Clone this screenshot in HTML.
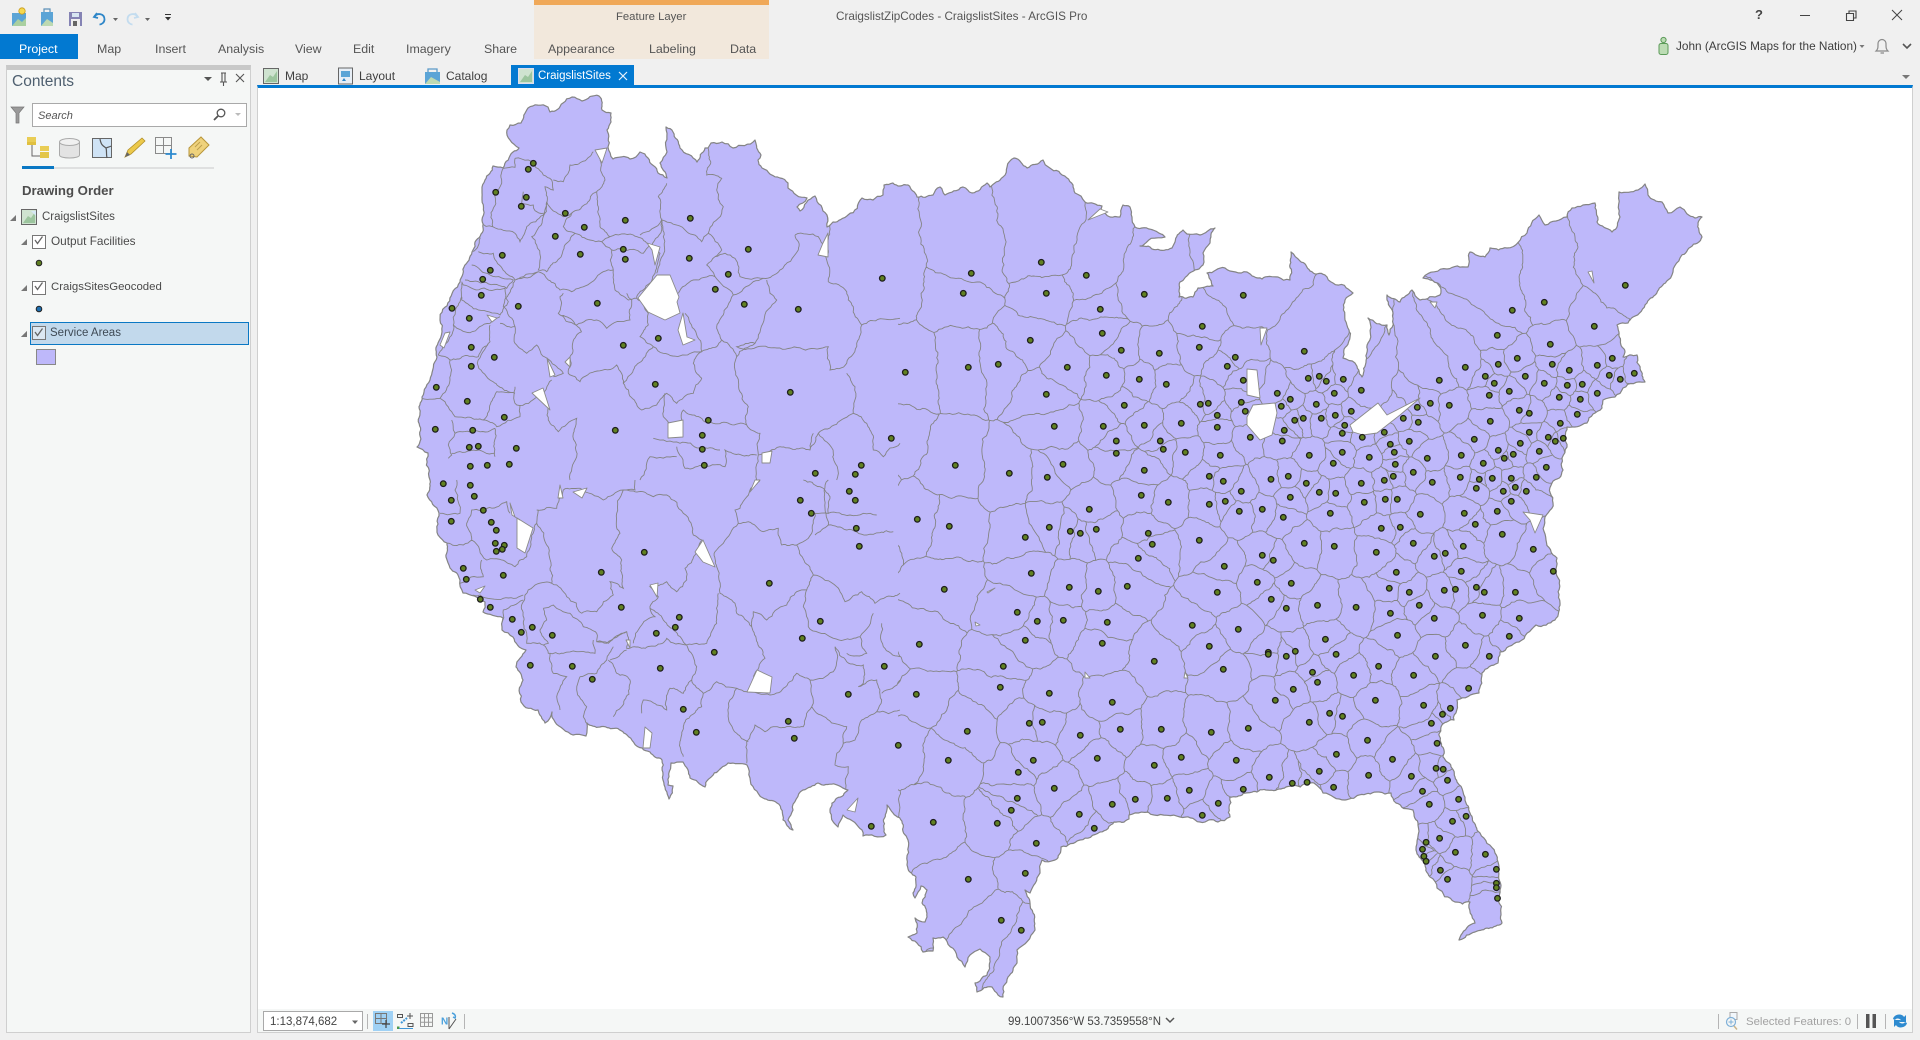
<!DOCTYPE html>
<html lang="en">
<head>
<meta charset="utf-8">
<title>CraigslistZipCodes - CraigslistSites - ArcGIS Pro</title>
<style>
html,body{margin:0;padding:0;width:1920px;height:1040px;overflow:hidden;background:#f0f0f0;font-family:"Liberation Sans",sans-serif;color:#444}
.b{position:absolute;box-sizing:border-box}
.t{position:absolute;white-space:nowrap;line-height:16px;font-size:12px}
.r{font-size:12.4px;color:#555}
svg{position:absolute;overflow:visible}
</style>
</head>
<body>
<!-- ribbon -->
<div class="b" style="left:534px;top:0;width:235px;height:59px;background:#f2e8dc"></div>
<div class="b" style="left:534px;top:0;width:235px;height:5px;background:#f0a858"></div>
<div class="t" style="left:616px;top:9px;color:#555;font-size:11.300px">Feature Layer</div>
<div class="t" style="left:836px;top:9px;color:#555;font-size:11.700px">CraigslistZipCodes - CraigslistSites - ArcGIS Pro</div>
<div class="b" style="left:0;top:34px;width:78px;height:25px;background:#0279d1"></div>
<div class="t" style="left:19px;top:41px;color:#fff;font-size:12.400px">Project</div>
<div class="t r" style="left:97px;top:41px">Map</div>
<div class="t r" style="left:155px;top:41px">Insert</div>
<div class="t r" style="left:218px;top:41px">Analysis</div>
<div class="t r" style="left:295px;top:41px">View</div>
<div class="t r" style="left:353px;top:41px">Edit</div>
<div class="t r" style="left:406px;top:41px">Imagery</div>
<div class="t r" style="left:484px;top:41px">Share</div>
<div class="t r" style="left:548px;top:41px">Appearance</div>
<div class="t r" style="left:649px;top:41px">Labeling</div>
<div class="t r" style="left:730px;top:41px">Data</div>

<!-- quick access -->
<svg style="left:0;top:0" width="190" height="34" viewBox="0 0 190 34">
  <path d="M12 13h14v13H12z" fill="#5ba4d6"/><path d="M12 26l6-7 4 3 4-4v8z" fill="#a9cfa0"/><circle cx="22" cy="11" r="3.200" fill="#f5d84e" stroke="#c79a1a" stroke-width=".8"/>
  <path d="M41 12h12v14H41z" fill="#5ba4d6"/><path d="M41 26l6-7 6 4v3z" fill="#bcd9b2"/><path d="M44 12V9h6v3" fill="none" stroke="#5b8fb8" stroke-width="1.200"/>
  <path d="M69 12h13v14H69z" fill="#8583b4"/><path d="M71 19h9v7h-9z" fill="#eee"/><path d="M72 13h7v4h-7z" fill="#d8e6f2"/><path d="M73 21h4v5h-4z" fill="#666"/>
  <path d="M97 13l-3 4 4 1" fill="none" stroke="#2e86c8" stroke-width="1.800"/><path d="M94.500 16.500c3-4 10-3 10 3 0 3-3 5-5 5" fill="none" stroke="#2e86c8" stroke-width="1.800"/>
  <path d="M113 18h5l-2.500 3z" fill="#666"/>
  <path d="M135 13l3 4-4 1" fill="none" stroke="#c3dcef" stroke-width="1.800"/><path d="M137.500 16.500c-3-4-10-3-10 3 0 3 3 5 5 5" fill="none" stroke="#c3dcef" stroke-width="1.800"/>
  <path d="M145 18h5l-2.500 3z" fill="#666"/>
  <path d="M165 14h6v1h-6zM165 17h6l-3 3.500z" fill="#333"/>
</svg>

<!-- window controls -->
<div class="t" style="left:1755px;top:7px;font-weight:700;font-size:13px;color:#444">?</div>
<svg style="left:1790px;top:0" width="125" height="30" viewBox="0 0 125 30">
  <path d="M10 15.500h10" stroke="#444" stroke-width="1"/>
  <path d="M56.500 13.500h7v7h-7zM59 13.500V11h7v7h-2.500" fill="none" stroke="#444" stroke-width="1.100"/>
  <path d="M102 10l10 10M112 10l-10 10" stroke="#444" stroke-width="1"/>
</svg>
<svg style="left:1655px;top:36px" width="265" height="20" viewBox="0 0 265 20">
  <circle cx="8.500" cy="4" r="2.600" fill="#bcdcb4" stroke="#5b9a58"/><rect x="4" y="7.500" width="9" height="11" rx="2" fill="#bcdcb4" stroke="#5b9a58"/>
  <path d="M204.500 9h5l-2.500 3z" fill="#777"/>
  <path d="M221 15c2-2 2-3 2-7 0-6 8-6 8 0 0 4 0 5 2 7zM225.500 17h3.500" fill="#f0f0f0" stroke="#8a8a8a" stroke-width="1.200"/>
  <path d="M248 8l4 4 4-4" fill="none" stroke="#555" stroke-width="1.600"/>
</svg>
<div class="t" style="left:1676px;top:38px;color:#3d3d3d;font-size:11.800px">John (ArcGIS Maps for the Nation)</div>

<!-- contents pane -->
<div class="b" style="left:6px;top:65px;width:245px;height:968px;background:#f5f7f6;border:1px solid #cfcfcf;border-top:5px solid #c8c8c8"></div>
<div class="t" style="left:12px;top:73.500px;font-size:15.500px;color:#4f6070">Contents</div>
<div class="b" style="left:32px;top:103px;width:215px;height:24px;background:#fff;border:1px solid #a9a9a9"></div>
<div class="t" style="left:38px;top:108px;font-style:italic;color:#555;font-size:11px">Search</div>
<svg style="left:0;top:60px" width="255" height="320" viewBox="0 0 255 320">
  <path d="M204 17h8l-4 4z" fill="#555"/>
  <path d="M221 13h5M222 13v9h3v-9M220 22h7M223.500 22v4" fill="none" stroke="#555" stroke-width="1.100"/>
  <path d="M236 14l8 8M244 14l-8 8" stroke="#555" stroke-width="1.100"/>
  <path d="M11 47h13l-5 6v10h-3V53z" fill="#9a9a9a" stroke="#777" stroke-width=".7"/>
  <circle cx="221" cy="53" r="3.800" fill="#fff" stroke="#555" stroke-width="1.300"/><path d="M218 56l-4 4" stroke="#555" stroke-width="1.800"/>
  <path d="M235 53h6l-3 3z" fill="#bbb"/>
  <!-- tab icons -->
  <rect x="27" y="77" width="9" height="5" fill="#e9cd55"/><rect x="27" y="82" width="9" height="3" fill="#e0c040"/>
  <path d="M32 85v11h8" fill="none" stroke="#666"/><rect x="40" y="86" width="9" height="5" fill="#e9cd55"/><rect x="40" y="92" width="9" height="6" fill="#e3c648"/>
  <path d="M59.500 82v13c0 4 20 4 20 0V82" fill="#e3e3e3" stroke="#aaa"/><ellipse cx="69.500" cy="82" rx="10" ry="3.500" fill="#f0f0f0" stroke="#aaa"/>
  <rect x="92.500" y="78.500" width="19" height="19" fill="#cfe3f5" stroke="#666"/><path d="M100 79c1 6 3 7 6 9 1 3 0 6 1 10M106 88c2-1 4-1 5-2" fill="none" stroke="#555" stroke-width="1.200"/>
  <path d="M125 97l3-7 14-12 3 3-14 13z" fill="#ecc94b" stroke="#b2902a" stroke-width=".8"/><path d="M125 97l2-5 3 3z" fill="#666"/>
  <path d="M155.500 77.500h16v16h-16zM163.500 77.500v16M155.500 85.500h16" fill="none" stroke="#8a8a8a"/><path d="M171 89v10M165.500 94h11" stroke="#2e8bd0" stroke-width="1.800"/>
  <path d="M189 88l12-11 8 8-12 12-8-1z" fill="#efd27c" stroke="#b8963a"/><circle cx="192" cy="96" r="2" fill="none" stroke="#666"/><path d="M195 87l5-5M197 90l5-5" stroke="#bda050"/>
  <rect x="22" y="107.500" width="192" height="1" fill="#c9c9c9"/><rect x="22" y="106" width="32" height="3" fill="#0a78c4"/>
  <!-- tree -->
  <path d="M10 161l6-6v6z" fill="#777"/>
  <rect x="21.500" y="149.500" width="15" height="15" fill="#cfe3d0" stroke="#666"/><path d="M23 163l5-7 3 2 4-6v11z" fill="#9cc59e"/><path d="M31 151h5v5z" fill="#d6e8f5"/>
  <path d="M21 185l6-6v6zM21 231l6-6v6zM21 277l6-6v6z" fill="#777"/>
  <g fill="#fff" stroke="#777"><rect x="32.500" y="175.500" width="13" height="13"/><rect x="32.500" y="221.500" width="13" height="13"/><rect x="32.500" y="267.500" width="13" height="13"/></g>
</svg>
<div class="t" style="left:22px;top:182.500px;font-size:13.200px;font-weight:700;color:#4d4d4d">Drawing Order</div>
<div class="t" style="left:42px;top:209px;color:#4a4a4a;font-size:11.500px">CraigslistSites</div>
<div class="t" style="left:51px;top:233px;color:#4a4a4a;font-size:11.800px">Output Facilities</div>
<div class="t" style="left:51px;top:279px;color:#4a4a4a;font-size:11.400px">CraigsSitesGeocoded</div>
<div class="b" style="left:30px;top:322px;width:219px;height:23px;background:#c2d9ec;border:1px solid #0a78c4"></div>
<div class="t" style="left:50px;top:325px;color:#3f4a55;font-size:11.500px">Service Areas</div>
<svg style="left:0;top:230px" width="70" height="140" viewBox="0 0 70 140">
  <path d="M21 107l6-6v6z" fill="#777"/>
  <rect x="32.500" y="96.500" width="13" height="13" fill="#dce8f2" stroke="#777"/>
  <path d="M35 10l2.500 3.500 5-7M35 56l2.500 3.500 5-7M35 102l2.500 3.500 5-7" fill="none" stroke="#666" stroke-width="1.300"/>
  <circle cx="39" cy="33" r="2.800" fill="#5f7f22" stroke="#222"/>
  <circle cx="39" cy="79" r="2.800" fill="#1f6fb0" stroke="#222"/>
  <rect x="36.500" y="119.500" width="19" height="15" fill="#beb8fa" stroke="#888"/>
</svg>

<!-- doc tabs -->
<div class="b" style="left:511px;top:65px;width:123px;height:21px;background:#0279d1"></div>
<div class="t" style="left:285px;top:68px;color:#3f3f3f;font-size:12px">Map</div>
<div class="t" style="left:359px;top:68px;color:#3f3f3f;font-size:12px">Layout</div>
<div class="t" style="left:446px;top:68px;color:#3f3f3f;font-size:12px">Catalog</div>
<div class="t" style="left:538px;top:68px;color:#fff;font-size:11.500px">CraigslistSites</div>
<svg style="left:255px;top:60px" width="400" height="28" viewBox="0 0 400 28">
  <rect x="8.500" y="8.500" width="15" height="15" fill="#cfe3d0" stroke="#666"/><path d="M10 22l5-7 3 2 4-6v11z" fill="#9cc59e"/>
  <rect x="83.500" y="8" width="14" height="16" fill="#e7eef6" stroke="#666"/><path d="M86 11h9v6h-9z" fill="#5ba4d6"/><path d="M87 21h4l-2-3z" fill="#2e86c8"/>
  <path d="M170 12h15v12h-15z" fill="#5ba4d6"/><path d="M170 24l6-7 9 5v2z" fill="#bcd9b2"/><path d="M173 12V9h9v3" fill="none" stroke="#5b9ac8" stroke-width="1.300"/>
  <rect x="263.500" y="8.500" width="15" height="15" fill="#cfe3d0" stroke="#dde"/><path d="M265 22l5-7 3 2 4-6v11z" fill="#9cc59e"/>
  <path d="M364 12l8 8M372 12l-8 8" stroke="#e8f2fb" stroke-width="1.200"/>
</svg>
<svg style="left:1900px;top:72px" width="14" height="10" viewBox="0 0 14 10"><path d="M2 3h8l-4 4z" fill="#777"/></svg>

<!-- map view -->
<div class="b" style="left:257px;top:85px;width:1656px;height:948px;background:#fff;border:1px solid #cfcfcf;border-top:3px solid #0279d1"></div>
<div class="b" style="left:258px;top:1009px;width:1654px;height:23px;background:#f5f7f6"></div>

<svg id="map" style="left:0;top:0" width="1920" height="1040" viewBox="0 0 1920 1040">
  <defs>
    <clipPath id="us"><polygon id="clipPoly" points=""/></clipPath>
    <clipPath id="east"><rect x="898" y="80" width="830" height="935"/></clipPath>
  </defs>
  <polygon id="usFill" fill="#beb8fa" stroke="#848484" stroke-width="1.200" stroke-linejoin="round" points=""/>
  <g clip-path="url(#us)" fill="none" stroke="#848484" stroke-width=".9">
    <path id="lines" clip-path="url(#east)" d=""/>
    <path id="west" d=""/>
  </g>
  <g id="holes" fill="#fff" stroke="#8a8a8a" stroke-width=".9" stroke-linejoin="round"></g>
  <g id="dots" fill="#618122" stroke="#1e1e1e" stroke-width="1.300"></g>
</svg>

<!-- status bar -->
<div class="b" style="left:263px;top:1011px;width:100px;height:20px;background:#fff;border:1px solid #a9a9a9"></div>
<div class="t" style="left:270px;top:1014px;color:#444;font-size:11.500px">1:13,874,682</div>
<div class="b" style="left:373px;top:1011px;width:20px;height:20px;background:#9fd1f5"></div>
<div class="t" style="left:1008px;top:1014px;color:#444;font-size:11.500px">99.1007356°W 53.7359558°N</div>
<div class="t" style="left:1746px;top:1014px;color:#a2a2a2;font-size:11.400px">Selected Features: 0</div>
<svg style="left:0;top:1005px" width="1920" height="32" viewBox="0 0 1920 32">
  <path d="M352 15.500h6l-3 3.500z" fill="#666"/>
  <path d="M367.500 9v15M464.500 9v15M1718.500 9v15M1857.500 9v15M1885.500 9v15" stroke="#b5b5b5"/>
  <path d="M375.500 8.500h11v10h-11zM381 8.500v10M375.500 13.500h11" fill="none" stroke="#777"/><path d="M386 15v8M382 19h8" stroke="#444" stroke-width="1.200"/>
  <path d="M397.500 9.500h5v3h-5zM408 18.500h5v3h-5z" fill="none" stroke="#555"/><path d="M401 18l6-5" stroke="#3f97d8" stroke-width="2" stroke-dasharray="2 1"/><path d="M410 8v6M407 11h6" stroke="#555"/><rect x="397" y="21.500" width="2.500" height="2.500" fill="#4c9a4c"/><path d="M399 23.500h14" stroke="#3f97d8"/>
  <path d="M420.500 8.500h12v13h-12zM420.500 12.800h12M420.500 17.200h12M424.500 8.500v13M428.500 8.500v13" fill="none" stroke="#999"/>
  <text x="441" y="19.500" font-family="Liberation Sans" font-size="10" font-weight="700" fill="#4aa0dc">N</text>
  <path d="M449 12v12M456 14l-7 10" fill="none" stroke="#555"/><path d="M452 8c3 1 4 3 3 5l-2-1" fill="none" stroke="#4aa0dc" stroke-width="1.500"/>
  <path d="M1166 13l4 4 4-4" fill="none" stroke="#555" stroke-width="1.500"/>
  <rect x="1730" y="7.500" width="7" height="7" fill="#f2f7fb" stroke="#aaa"/>
  <circle cx="1731" cy="17" r="4.500" fill="#f5f7f6" stroke="#7fb0d8" stroke-width="1.200"/><path d="M1728.500 17h5M1731 14.500v5" stroke="#7fb0d8"/><path d="M1734 21l3 3.500" stroke="#c9b48a" stroke-width="1.500"/>
  <path d="M1866 9h3.500v14H1866zM1872.500 9h3.500v14h-3.500z" fill="#555"/>
  <path d="M1893 14c1-5 9-6 11-2l2-2v7h-7l2-2c-2-2-5-2-6 0z" fill="#2e8bd0"/><path d="M1907 18c-1 5-9 6-11 2l-2 2v-7h7l-2 2c2 2 5 2 6 0z" fill="#2e8bd0"/>
</svg>

<script>
(function(){
var outline="507,130 510,125 521,123 528,108 548,107 550,112 563,103 572,97 582,101 599,96 602,110 611,113 611,122 607,130 608,147 613,159 630,159 640,152 648,158 658,173 667,178 660,163 667,152 666,127 673,132 680,148 697,162 705,148 708,148 711,143 722,142 733,148 755,140 761,155 758,160 762,168 780,178 788,183 788,188 807,198 797,207 800,211 815,196 827,215 827,227 833,222 848,215 862,198 873,200 883,195 884,185 893,183 900,186 908,185 917,197 933,195 940,187 945,195 963,187 972,193 987,183 990,187 1003,177 1014,158 1027,168 1043,160 1073,185 1075,193 1085,202 1102,206 1100,210 1110,217 1120,217 1123,205 1130,207 1135,227 1153,230 1165,237 1140,246 1172,248 1175,242 1183,230 1187,234 1200,235 1215,228 1210,243 1203,253 1203,265 1180,282 1179,297 1193,297 1198,288 1213,286 1207,273 1225,268 1247,272 1262,279 1278,277 1290,280 1291,252 1300,261 1310,271 1325,275 1333,283 1353,293 1345,300 1345,320 1349,330 1343,358 1355,363 1362,377 1368,343 1368,318 1387,325 1389,335 1393,313 1387,295 1400,302 1412,290 1420,300 1440,295 1440,287 1423,278 1447,269 1468,267 1470,252 1485,257 1490,248 1507,248 1527,233 1539,215 1545,225 1567,217 1572,208 1583,205 1595,203 1597,222 1612,232 1620,217 1619,192 1638,190 1645,184 1648,195 1662,202 1668,213 1680,207 1695,218 1702,217 1698,223 1702,237 1680,258 1668,280 1647,303 1633,317 1628,323 1617,325 1625,352 1623,357 1637,355 1645,382 1623,388 1615,397 1603,400 1602,408 1587,423 1567,427 1565,437 1567,447 1563,470 1552,483 1553,503 1548,513 1545,517 1546,540 1557,558 1560,603 1555,620 1536,625 1519,642 1500,652 1498,663 1482,673 1479,693 1457,700 1454,720 1441,727 1443,757 1457,782 1466,803 1477,830 1480,833 1495,853 1500,890 1502,923 1475,932 1459,940 1461,935 1475,923 1470,902 1455,902 1437,888 1430,877 1416,850 1418,825 1413,810 1396,803 1391,793 1379,792 1345,800 1323,793 1314,783 1286,787 1257,792 1230,797 1229,808 1230,817 1218,822 1200,822 1180,817 1154,815 1129,815 1129,819 1114,822 1100,832 1080,840 1061,847 1055,860 1042,860 1040,873 1030,893 1025,890 1030,903 1033,913 1035,930 1017,950 1017,963 1008,977 1003,997 998,995 992,987 977,992 975,983 987,975 990,957 980,949 970,955 965,967 957,957 943,937 933,938 933,951 923,952 917,943 908,937 917,933 915,918 925,922 927,917 922,903 927,890 921,886 915,898 913,893 916,877 907,865 908,840 893,813 887,805 886,835 863,836 862,830 845,817 843,815 838,827 830,810 848,790 818,783 803,790 793,810 788,820 793,830 783,820 777,803 763,798 750,778 747,765 728,763 705,787 690,778 683,762 671,763 668,785 673,786 669,799 663,780 662,760 650,752 642,748 627,735 600,727 587,723 586,736 573,735 555,722 552,712 545,723 538,710 521,702 523,680 516,667 526,650 513,637 502,630 503,618 483,612 485,602 463,593 460,580 450,568 446,557 447,543 438,535 439,513 427,495 430,480 429,477 428,453 417,447 420,413 422,397 437,357 438,343 440,320 460,282 473,250 482,220 485,180 493,166 503,168 513,152 519,148 510,140";
var holes=["638,298 657,275 670,275 679,297 677,302 680,313 665,320 648,312","683,313 687,337 695,340 683,345 678,330","647,243 660,247 655,265 652,250","595,150 607,148 602,163","823,243 828,233 828,257 818,255","532,393 543,388 550,410","547,358 555,375 550,377","565,362 570,357 570,367","668,423 683,420 683,437 668,438","762,453 772,451 770,463 762,463","445,333 450,332 444,348 440,345","487,315 497,318 492,322","517,518 533,528 525,553 517,548","510,503 515,517 520,520 512,515","695,552 703,540 715,567 703,562","650,585 658,583 657,597","757,670 772,677 770,693 747,692","573,492 587,488 582,498","560,485 563,498 558,498","475,590 485,586 480,593","645,727 652,733 650,748 643,748","626,640 630,640 630,648","755,480 760,480 750,492","847,810 858,798 855,812","1247,369 1257,370 1260,398 1247,395","1253,405 1275,403 1277,413 1272,435 1260,440 1247,425 1247,417","1260,328 1267,328 1261,345","1350,425 1378,403 1387,415 1420,398 1400,415 1377,433 1363,435 1353,432","1523,512 1543,515 1535,533 1530,520","1430,302 1437,302 1435,308","1588,272 1592,271 1594,283","987,592 995,588 988,593","975,622 980,625 976,626","1085,672 1090,678 1085,678","1185,672 1188,678 1184,678","1108,212 1100,209 1088,220"];
// traced western boundaries: [ox, oy, polylines in 3x crop coordinates]
var westA=["345,235 345,262 310,265 305,310 280,385 278,440 345,460 360,485 380,440 430,405 440,370 435,320 460,330 455,300 430,285 385,240 345,235","370,335 365,370 400,375 405,392 430,400","460,300 490,305 510,255 580,215","440,365 490,410 520,395 590,335 615,300 600,240","440,365 395,470 410,495 415,570 440,575 470,545 525,460 490,440 520,395","220,515 240,430 278,440","235,515 280,520 345,600 415,575","215,555 270,585 340,600 320,625 195,600","185,605 190,615 315,625 325,665 300,705 235,690 185,660 185,610","185,650 160,735 210,758 270,730 300,710","160,735 115,825 150,840 235,830 270,785 270,735","345,600 415,575 445,600 480,630 515,635 570,610 610,575 640,570 635,510 605,485 630,470 700,465 740,490","605,485 570,480 525,460","635,510 730,520 750,495","640,570 645,630 685,660 710,655 765,580 780,520 760,500","590,335 595,380 600,440 630,470","755,505 785,450 785,420 720,465","800,310 775,350 785,420 790,470 770,580","785,420 830,435 860,455 905,485 925,460 965,400 970,380 950,330 965,295 920,285 925,205","925,460 965,510 945,530 975,520 1005,535 1020,590 1090,595 1140,570 1195,510 1185,465","945,530 920,555 945,590 880,600 835,640","945,590 1000,645 1060,605 1090,595","1000,645 950,740 965,780 950,800 905,815 855,700","1100,600 1110,640 1130,660 1065,790 1010,830 965,780","1185,465 1255,470 1280,540 1285,605 1340,635 1360,680 1385,735 1500,715","1280,405 1285,520","1065,790 1010,800 1285,800 1290,870 1340,850 1370,790 1385,735","1010,830 1005,870 1045,980 1040,1035 1080,1060 1075,1125 1140,1100 1230,1110 1255,1060 1360,1000 1365,920 1340,880","1040,1035 940,1030 850,990 845,1020 815,1040 790,1010 795,940","905,815 880,850 905,895 880,940 840,960 830,970 800,940 770,975 725,990 670,910 700,870 760,800 720,770 745,735 745,700 710,655","545,755 475,700 480,650 490,640","475,700 530,735 590,720 620,745 690,720 695,660 680,640","545,755 510,830 505,880 540,905 650,855 670,910","760,800 790,820 905,815","300,730 345,740 345,790 380,820 410,795 490,880 460,890","345,740 310,680 345,600","270,785 232,850 270,900 345,940","150,840 150,900 120,955 165,1010 250,1020 290,935 345,940","455,900 415,950 350,975 345,920","120,955 60,950","250,1020 290,1040 360,1010 360,975","285,1045 285,1130","155,1020 165,1060 145,1095 155,1125 145,1135","440,960 445,1020 475,1055 530,1015 520,1060 530,1130 510,1200","165,1060 285,1045","155,1120 285,1120","1230,1110 1240,1060","830,1100 855,1165 975,1160 975,1110 1070,1125","760,1075 840,1090 960,1110","720,1200 750,1130 830,1130","1075,1125 1070,1200","1255,1060 1300,1120 1310,1200","1360,1000 1400,1030 1420,1110 1450,1130 1500,1090"];
var westB=["120,100 180,100 165,30 170,0","415,90 410,130 380,230 345,260 260,240 215,180 200,130 215,90 320,65 330,100","140,190 190,195 215,180","245,240 250,290 180,310","410,130 450,265 455,310 500,350 545,400","455,310 400,320 375,345 370,430 380,490 430,495 445,520 490,520 530,515 585,520 580,480","190,340 240,345 310,355 370,345","305,450 310,390 370,360","430,385 440,420 420,450 445,490 430,495","430,385 460,375 510,400 550,440 590,460 590,485 620,490 680,455","545,400 590,395 640,345 630,305 670,325 665,240 635,205 660,160 650,100 670,30","680,30 760,50 800,45 850,100 880,165 905,180 885,225 855,265 860,300 830,335 800,305 750,320 775,350 750,385 765,410 725,435 700,490","410,90 470,85 490,30 540,25 610,60 670,30 705,30 705,0","950,260 945,215 970,190 1015,130 1045,125 1090,155 1135,145 1145,195 1190,195 1240,285 1220,330 1190,335 1160,375 1100,420 1060,395 1055,440 1010,400 1005,370 960,340 950,260","1015,130 1005,90 1020,85 1050,30 1080,0","1190,195 1225,175 1235,160 1245,100 1285,100 1290,50 1260,20 1210,0","1285,100 1350,105 1430,105","1285,135 1340,150 1400,165 1480,155","1245,165 1285,135 1285,0","1240,285 1310,320 1335,365 1385,335 1425,370 1500,340","1220,330 1210,380 1225,440 1290,470 1330,480 1380,470 1420,400","1055,440 1095,535 1060,590","955,340 950,430 920,490 860,495 790,420 750,385","860,495 890,560 875,600 850,640 810,625 800,690 770,675 730,660 725,700","590,485 625,490 680,455 680,505 725,505 800,475 860,495","625,540 650,580 690,600 665,680 640,710","875,600 910,640 905,680 850,740 850,830","910,640 950,605 1010,625 985,700 1010,760 1045,785","1010,625 1040,635 1110,645 1190,580 1230,600 1240,670 1235,680 1210,740 1120,740 1095,755 1065,735 1040,785 1040,850","1235,680 1340,740 1330,790 1305,855 1345,860 1340,935","1230,600 1300,575 1305,500 1340,545 1390,555 1390,610 1375,620 1430,600 1445,660 1430,695 1385,720 1365,780 1330,790","1430,695 1500,690","1340,520 1400,520 1380,470","1445,430 1450,500 1500,530","1445,640 1500,600","450,520 460,580 500,590 470,650 480,690","540,590 530,630 560,680 550,710 560,730","540,590 590,580 620,540 640,500","680,510 630,540"];
var S=[];
function add(ox,oy,sx,sy,a){for(var i=0;i<a.length;i+=2){S.push([ox+a[i]/sx,oy+a[i+1]/sy]);}}
add(400,80,3,3,[400,250,385,268,287,337,379,352,364,379,496,400,553,442,466,469,676,421,871,415,670,508,676,538,541,523,307,526,271,571,248,598,244,646,156,685,208,715,355,679,592,670,868,535,1045,508,985,583,946,628,1033,673,1195,688,1447,595,775,775,670,796,214,802,283,832,214,859,109,922,766,913,1171,937,202,964,313,1012,106,1048,218,1051,925,1021,907,1066,907,1108,913,1156,646,1051,349,1105,235,1099,208,1102,211,1159,262,1156,328,1153,1246,1180,1384,1156,1366,1183,1474,1075]);
add(400,480,3,3,[130,11,211,16,223,49,154,61,250,91,154,124,274,127,289,151,286,190,313,196,307,208,289,214,190,265,199,298,310,286,241,358,271,382,337,418,364,457,397,442,457,466,391,556,517,559,577,598,733,217,604,277,664,382,838,412,826,442,769,460,943,517,781,565,850,688,889,757,1108,310,1261,424,1207,475,1201,61,1234,100,1348,34,1366,61,1369,145,1378,199,1453,559,1345,643,1165,724,1183,775,1414,1039,1495,796]);
add(900,80,3,3,[424,547,214,580,190,640,439,640,559,586,733,643,601,688,1030,646,907,739,607,760,391,781,664,811,778,820,898,802,1006,832,982,859,295,853,205,862,16,877,502,862,619,886,718,898,799,913,1030,901,439,943,673,976,1132,940,1171,958,1144,979,901,973,925,970,1024,967,1036,994,952,1006,1184,1021,463,1039,610,1039,733,1036,844,1030,952,1042,1153,1051,1051,1072]);
add(880,440,3,3,[226,76,388,100,549,73,709,3,841,3,1207,3,709,40,850,28,916,37,1021,46,793,91,502,112,988,109,1030,124,1173,118,1225,109,784,166,865,187,1084,154,1036,184,988,193,1231,172,628,208,1078,214,1147,208,1210,232,112,238,208,259,508,262,436,292,571,274,601,280,649,268,805,280,817,313,958,301,775,355,1147,346,1180,361,1033,379,454,400,193,448,568,442,655,454,742,439,1132,427,1234,430,1012,457,1174,478,1219,505,412,517,472,544,550,541,682,547,937,556,1075,568,118,613,436,601,667,610,988,619,823,664,1165,637,1165,643,1246,634,1219,649,370,679,1030,688,1240,748,361,742,508,760,109,763,697,787,1186,781,262,874,448,850,487,847,601,886,721,868,844,868,994,877,1105,865,205,961,652,955,460,961,904,952,1069,961,823,976,415,997,1168,1012,1237,1030,523,1045,928,1051,1090,1048,412,1075,862,1075,766,1078,394,1111,697,1093,1015,1090,598,1123,967,1126,160,1147,352,1150,643,1165]);
add(1300,180,3,3,[13,514,25,595,58,589,79,604,130,598,184,631,103,640,49,673,10,715,64,715,106,706,154,694,134,736,127,760,187,772,253,757,310,715,355,727,352,682,391,670,448,676,418,601,496,562,592,466,637,391,733,367,883,439,976,316,751,493,652,535,595,553,757,553,556,589,583,610,676,589,733,610,808,571,892,556,937,535,928,586,961,598,1003,580,847,613,802,616,628,634,568,646,778,652,841,658,892,640,658,691,688,700,832,703,571,724,781,730,688,757,745,772,766,784,790,775,523,778,328,784,271,793,283,817,127,817,208,832,28,826,100,850,286,853,382,835,484,826,595,811,661,790,718,814,640,823,613,835,550,850,739,862,280,889,340,877,253,901,397,907,481,892,538,898,577,895,634,895,709,892,19,910,184,910,58,937,107,940,529,925,646,922,610,934,679,934,193,967,256,958,292,958,634,964,91,1000,592,994,361,1003,493,1000,526,1033,244,1045,301,1042,607,1063,13,1090,103,1099,340,1090,490,1099,229,1117,436,1120,403,1129,700,1108,289,1177,484,1174,760,1174]);
add(1000,500,2.8,3,[1090,265,1146,277,1244,271,1275,268,1334,262,1356,277,1443,277,1174,316,1093,340,889,316,997,322,1216,355,1351,346,1454,355,1426,409,1113,406,911,418,1303,436,941,463,1219,469,1370,469,875,517,1060,499,990,526,1158,526,889,547,1312,565,1051,601,1186,616,1261,625,1239,643,923,640,959,649,866,667,1208,670,1224,730,1029,721,942,763,1099,778,1221,805,1241,808,1253,841,1152,829,1032,826,894,814,860,847,934,862,1183,874,1284,898,1202,913,1305,949,1267,964,1193,1027,1231,1015,1183,1048,1187,1069,1193,1084,1275,1057,1359,1063,1390,1108,1233,1111,1253,1138,1390,1150,1390,1163,1393,1195]);
add(780,740,3,3,[769,310,736,400,565,418,664,541,724,571]);

function rng(seed){var s=seed>>>0||1;return function(){s^=s<<13;s>>>=0;s^=s>>>17;s^=s<<5;s>>>=0;return s/4294967296;};}
function wob(a,b,r,k,out){var dx=b[0]-a[0],dy=b[1]-a[1],L=Math.sqrt(dx*dx+dy*dy);if(L<3.500)return;var d=(r()-.5)*k*Math.min(L,28);var m=[(a[0]+b[0])/2-dy/L*d,(a[1]+b[1])/2+dx/L*d];wob(a,m,r,k,out);out.push(m);wob(m,b,r,k,out);}
function pts(s){return s.split(" ").map(function(p){var q=p.split(",");return [+q[0],+q[1]];});}
function f(n){return (Math.round(n*10)/10).toString();}
function rough(arr,k){var out=[];for(var i=0;i<arr.length;i++){var a=arr[i],b=arr[(i+1)%arr.length];out.push(a);wob(a,b,rng((a[0]*73856093)^(b[1]*19349663)^(i*83492791)),k,out);}return out;}
function str(a){return a.map(function(p){return f(p[0])+","+f(p[1]);}).join(" ");}
var o=str(rough(pts(outline),.28));
document.getElementById("usFill").setAttribute("points",o);
document.getElementById("clipPoly").setAttribute("points",o);
var NS="http://www.w3.org/2000/svg",hg=document.getElementById("holes"),dg=document.getElementById("dots");
holes.forEach(function(h){var e=document.createElementNS(NS,"polygon");e.setAttribute("points",h);hg.appendChild(e);});

// traced west
var w="";
function trace(list,ox,oy){list.forEach(function(l,li){var p=pts(l).map(function(q){return [ox+q[0]/3,oy+q[1]/3];});w+="M"+f(p[0][0])+" "+f(p[0][1]);for(var i=0;i<p.length-1;i++){var line=[];wob(p[i],p[i+1],rng((li+1)*48271+i*16807+ox*31),.26,line);line.forEach(function(m){w+="L"+f(m[0])+" "+f(m[1]);});w+="L"+f(p[i+1][0])+" "+f(p[i+1][1]);}});}
trace(westA,400,80);trace(westB,400,480);
document.getElementById("west").setAttribute("d",w);

// nearest-facility service area cells (central and east)
var X0=400,Y0=80,X1=1720,Y1=1010,seen={},d=[];
function clip(poly,mx,my,nx,ny){var r=[],n=poly.length;for(var i=0;i<n;i++){var a=poly[i],b=poly[(i+1)%n];var da=(a[0]-mx)*nx+(a[1]-my)*ny,db=(b[0]-mx)*nx+(b[1]-my)*ny;if(da<=0)r.push(a);if((da<0&&db>0)||(da>0&&db<0)){var t=da/(da-db);r.push([a[0]+(b[0]-a[0])*t,a[1]+(b[1]-a[1])*t]);}}return r;}
S.forEach(function(s,i){
  var others=[];S.forEach(function(q,j){if(j!==i){var dd=(q[0]-s[0])*(q[0]-s[0])+(q[1]-s[1])*(q[1]-s[1]);if(dd>1)others.push([dd,q]);}});
  others.sort(function(a,b){return a[0]-b[0];});
  var poly=[[X0,Y0],[X1,Y0],[X1,Y1],[X0,Y1]];
  for(var k=0;k<others.length;k++){
    var mr=0;poly.forEach(function(p){var v=(p[0]-s[0])*(p[0]-s[0])+(p[1]-s[1])*(p[1]-s[1]);if(v>mr)mr=v;});
    if(others[k][0]>4*mr)break;
    var q=others[k][1];poly=clip(poly,(s[0]+q[0])/2,(s[1]+q[1])/2,q[0]-s[0],q[1]-s[1]);
    if(poly.length<3)break;
  }
  for(var n=0;n<poly.length;n++){
    var a=poly[n],b=poly[(n+1)%poly.length];
    var ka=Math.round(a[0]*2)+"_"+Math.round(a[1]*2),kb=Math.round(b[0]*2)+"_"+Math.round(b[1]*2);
    if(ka===kb)continue;
    var key=ka<kb?ka+"|"+kb:kb+"|"+ka;
    if(seen[key])continue;seen[key]=1;
    var p=ka<kb?a:b,e=ka<kb?b:a;
    var h=Math.abs(Math.round(p[0]*97)*7919+Math.round(p[1]*89)*104729+Math.round(e[0]*83)*1299709+Math.round(e[1]*79)*15485863)%2147483647;
    var line=[];wob(p,e,rng(h+11),.3,line);
    var c="M"+f(p[0])+" "+f(p[1]);line.forEach(function(m){c+="L"+f(m[0])+" "+f(m[1]);});c+="L"+f(e[0])+" "+f(e[1]);
    d.push(c);
  }
});
document.getElementById("lines").setAttribute("d",d.join(""));
S.forEach(function(s){var c=document.createElementNS(NS,"circle");c.setAttribute("cx",f(s[0]));c.setAttribute("cy",f(s[1]));c.setAttribute("r","2.800");dg.appendChild(c);});
})();
</script>
</body>
</html>
